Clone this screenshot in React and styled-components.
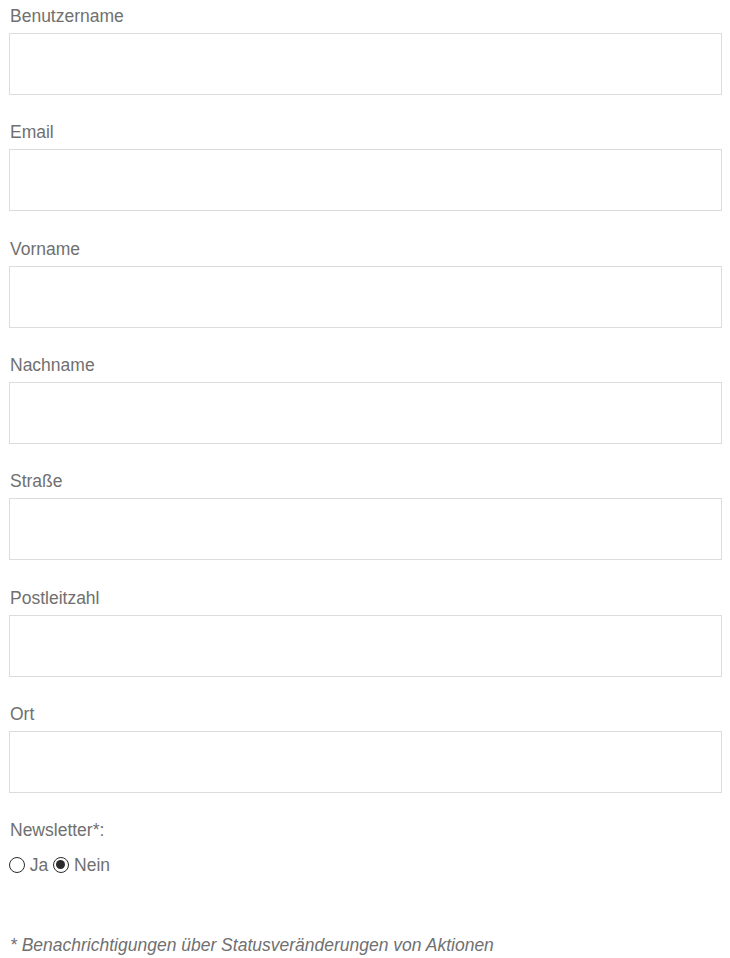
import React from 'react';
import styled, {createGlobalStyle} from 'styled-components';

const GlobalStyle = createGlobalStyle`
    html, body {
        margin: 0;
        padding: 0;
        background: #fff;
    }
    body {
        font-family: "Liberation Sans", Arial, sans-serif;
    }
`

const fields = ['Benutzername', 'Email', 'Vorname', 'Nachname', 'Straße', 'Postleitzahl', 'Ort'];

const App = () => {
    return(<>
        <GlobalStyle />
        <FormWrap onSubmit={e => e.preventDefault()}>
            {fields.map(name => (
                <FieldWrap key={name}>
                    <Label htmlFor={name}>{name}</Label>
                    <TextInput id={name} type="text" />
                </FieldWrap>
            ))}

            <FieldWrap>
                <Label>Newsletter*:</Label>
                <RadioRow>
                    <Radio type="radio" name="newsletter" value="ja" /> Ja{' '}
                    <Radio type="radio" name="newsletter" value="nein" defaultChecked /> Nein
                </RadioRow>
            </FieldWrap>

            <Note>* Benachrichtigungen über Statusveränderungen von Aktionen</Note>
        </FormWrap>
    </>)
}

const FormWrap = styled.form`
    display: flex;
    flex-direction: column;
    padding: 4px 8px 0 9px;
    color: #707070;
    font-size: 17.5px;
`

const FieldWrap = styled.div`
    display: flex;
    flex-direction: column;
    margin-top: 25.33px;
    &:first-child {
        margin-top: 0;
    }
`

const Label = styled.label`
    display: block;
    line-height: 24px;
    margin-bottom: 5px;
    padding-left: 1px;
`

const TextInput = styled.input`
    box-sizing: border-box;
    width: 100%;
    height: 62px;
    border: 1px solid #dcdcdc;
    background: #fff;
    outline: none;
    padding: 0 12px;
    font-family: inherit;
    font-size: 16px;
    color: #555;
`

const RadioRow = styled.div`
    display: flex;
    align-items: center;
    white-space: pre;
    line-height: 24px;
    margin-top: 5.5px;
`

const Radio = styled.input`
    appearance: none;
    box-sizing: border-box;
    width: 16px;
    height: 16px;
    margin: 0;
    border: 1.5px solid #2b2b2b;
    border-radius: 50%;
    background: #fff;
    position: relative;
    &:checked::after {
        content: '';
        position: absolute;
        left: 1.75px;
        top: 1.75px;
        width: 9.5px;
        height: 9.5px;
        border-radius: 50%;
        background: #2b2b2b;
    }
`

const Note = styled.p`
    margin: 56.5px 0 0 1px;
    font-style: italic;
    line-height: 24px;
`

export default App;
